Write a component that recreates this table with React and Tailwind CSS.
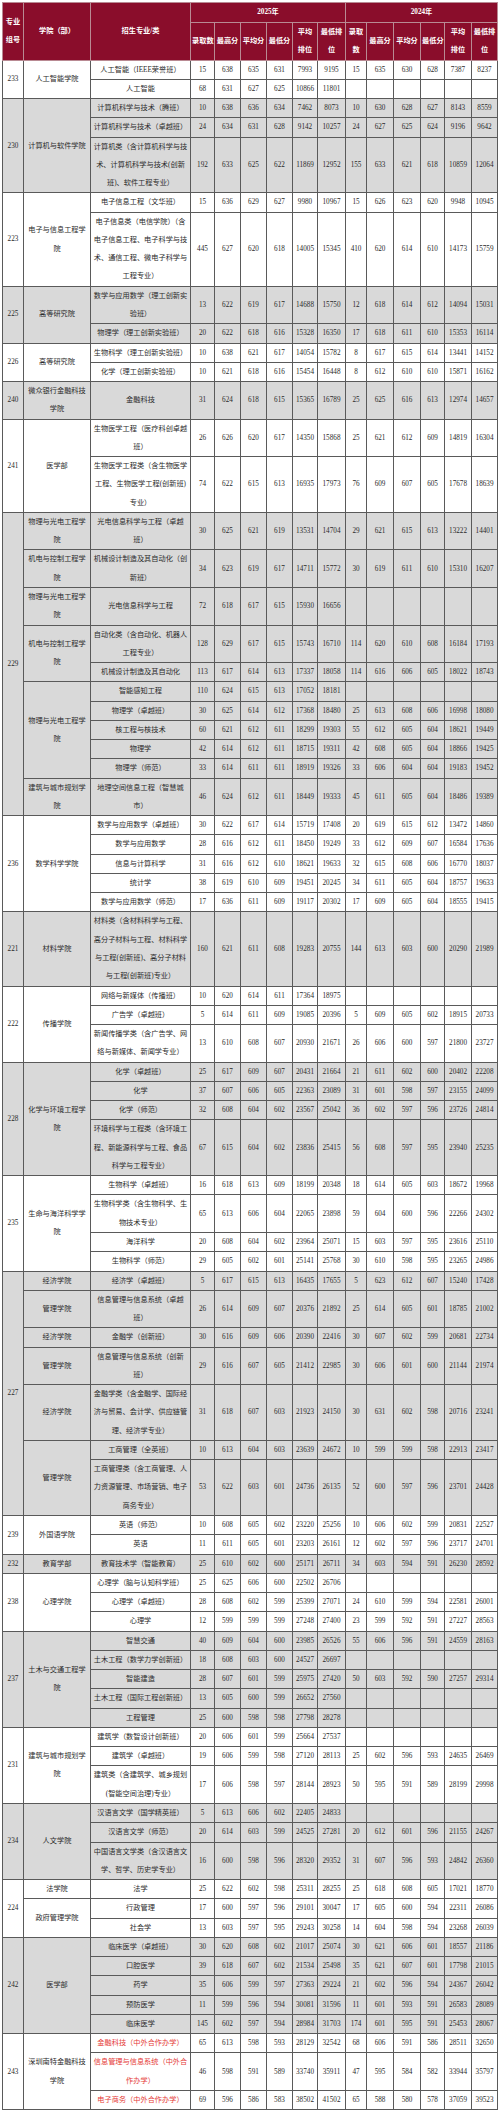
import React from 'react';

// 招生录取数据：每组 = 专业组号 + 若干行
const groups = [
  { code: '233', rows: [
    { col: ['人工智能学院'], span: 2, major: ['人工智能（IEEE荣誉班）'], n: '15 638 635 631 7993 9195 15 635 630 628 7387 8237' },
    { major: ['人工智能'], n: '68 631 627 625 10866 11801' },
  ]},
  { code: '230', rows: [
    { col: ['计算机与软件学院'], span: 3, major: ['计算机科学与技术（腾班）'], n: '10 638 636 634 7462 8073 10 630 628 627 8143 8559' },
    { major: ['计算机科学与技术（卓越班）'], n: '24 634 631 628 9142 10257 24 627 625 624 9196 9642' },
    { major: ['计算机类（含计算机科学与技', '术、计算机科学与技术(创新', '班)、软件工程专业）'], n: '192 633 625 622 11869 12952 155 633 621 618 10859 12064' },
  ]},
  { code: '223', rows: [
    { col: ['电子与信息工程学', '院'], span: 2, major: ['电子信息工程（文华班）'], n: '15 636 629 627 9980 10967 15 626 623 620 9948 10945' },
    { major: ['电子信息类（电信学院）（含', '电子信息工程、电子科学与技', '术、通信工程、微电子科学与', '工程专业）'], n: '445 627 620 618 14005 15345 410 620 614 610 14173 15759' },
  ]},
  { code: '225', rows: [
    { col: ['高等研究院'], span: 2, major: ['数学与应用数学（理工创新实', '验班）'], n: '13 622 619 617 14688 15750 12 618 614 612 14094 15031' },
    { major: ['物理学（理工创新实验班）'], n: '20 622 618 616 15328 16350 17 618 611 610 15353 16114' },
  ]},
  { code: '226', rows: [
    { col: ['高等研究院'], span: 2, major: ['生物科学（理工创新实验班）'], n: '10 638 621 617 14054 15782 8 617 615 614 13441 14152' },
    { major: ['化学（理工创新实验班）'], n: '10 621 618 616 15454 16448 8 612 610 610 15871 16162' },
  ]},
  { code: '240', rows: [
    { col: ['微众银行金融科技', '学院'], span: 1, major: ['金融科技'], n: '31 624 618 615 15365 16789 25 625 616 613 12974 14657' },
  ]},
  { code: '241', rows: [
    { col: ['医学部'], span: 2, major: ['生物医学工程（医疗科创卓越', '班）'], n: '26 626 620 617 14350 15868 25 621 612 609 14819 16304' },
    { major: ['生物医学工程类（含生物医学', '工程、生物医学工程(创新班)', '专业）'], n: '74 622 615 613 16935 17973 76 609 607 605 17678 18639' },
  ]},
  { code: '229', rows: [
    { col: ['物理与光电工程学', '院'], span: 1, major: ['光电信息科学与工程（卓越', '班）'], n: '30 625 621 619 13531 14704 29 621 615 613 13222 14401' },
    { col: ['机电与控制工程学', '院'], span: 1, major: ['机械设计制造及其自动化（创', '新班）'], n: '34 623 619 617 14711 15772 30 619 611 610 15310 16207' },
    { col: ['物理与光电工程学', '院'], span: 1, major: ['光电信息科学与工程'], n: '72 618 617 615 15930 16656' },
    { col: ['机电与控制工程学', '院'], span: 2, major: ['自动化类（含自动化、机器人', '工程专业）'], n: '128 629 617 615 15743 16710 114 620 610 608 16184 17193' },
    { major: ['机械设计制造及其自动化'], n: '113 617 614 613 17337 18058 114 616 606 605 18022 18743' },
    { col: ['物理与光电工程学', '院'], span: 5, major: ['智能感知工程'], n: '110 624 615 613 17052 18181' },
    { major: ['物理学（卓越班）'], n: '30 625 614 612 17368 18480 25 613 608 606 16998 18080' },
    { major: ['核工程与核技术'], n: '60 621 612 611 18299 19303 55 612 605 604 18621 19449' },
    { major: ['物理学'], n: '42 614 612 611 18715 19311 42 608 605 604 18866 19425' },
    { major: ['物理学（师范）'], n: '33 614 611 611 18919 19326 33 606 604 604 19183 19452' },
    { col: ['建筑与城市规划学', '院'], span: 1, major: ['地理空间信息工程（智慧城', '市）'], n: '46 624 612 611 18449 19333 45 611 605 604 18486 19389' },
  ]},
  { code: '236', rows: [
    { col: ['数学科学学院'], span: 5, major: ['数学与应用数学（卓越班）'], n: '30 622 617 614 15719 17408 20 619 615 612 13472 14860' },
    { major: ['数学与应用数学'], n: '28 616 612 611 18450 19249 33 612 609 607 16584 17636' },
    { major: ['信息与计算科学'], n: '31 616 612 610 18621 19633 32 615 608 606 16770 18037' },
    { major: ['统计学'], n: '38 619 610 609 19451 20245 34 611 605 604 18757 19633' },
    { major: ['数学与应用数学（师范）'], n: '17 636 611 609 19117 20302 17 609 605 604 18555 19415' },
  ]},
  { code: '221', rows: [
    { col: ['材料学院'], span: 1, major: ['材料类（含材料科学与工程、', '高分子材料与工程、材料科学', '与工程(创新班)、高分子材料', '与工程(创新班)专业）'], n: '160 621 611 608 19283 20755 144 613 603 600 20290 21989' },
  ]},
  { code: '222', rows: [
    { col: ['传播学院'], span: 3, major: ['网络与新媒体（传播班）'], n: '10 620 614 611 17364 18975' },
    { major: ['广告学（卓越班）'], n: '5 614 611 609 19085 20396 5 609 605 602 18915 20733' },
    { major: ['新闻传播学类（含广告学、网', '络与新媒体、新闻学专业）'], n: '13 610 608 607 20930 21671 26 606 600 597 21800 23727' },
  ]},
  { code: '228', rows: [
    { col: ['化学与环境工程学', '院'], span: 4, major: ['化学（卓越班）'], n: '25 617 609 607 20431 21664 21 611 602 600 20402 22208' },
    { major: ['化学'], n: '37 607 606 605 22363 23089 31 601 598 597 23155 24099' },
    { major: ['化学（师范）'], n: '32 608 604 602 23567 25042 36 602 597 596 23726 24814' },
    { major: ['环境科学与工程类（含环境工', '程、新能源科学与工程、食品', '科学与工程专业）'], n: '67 615 604 602 23836 25415 56 608 597 595 23940 25235' },
  ]},
  { code: '235', rows: [
    { col: ['生命与海洋科学学', '院'], span: 4, major: ['生物科学（卓越班）'], n: '16 618 613 609 18199 20348 18 614 605 603 18672 19968' },
    { major: ['生物科学类（含生物科学、生', '物技术专业）'], n: '65 613 606 604 22065 23898 59 604 600 596 22266 24302' },
    { major: ['海洋科学'], n: '20 608 604 602 23964 25071 15 603 597 595 23616 25110' },
    { major: ['生物科学（师范）'], n: '29 605 602 601 25141 25768 30 610 598 595 23265 24986' },
  ]},
  { code: '227', rows: [
    { col: ['经济学院'], span: 1, major: ['经济学（卓越班）'], n: '5 617 615 613 16435 17655 5 623 612 607 15240 17428' },
    { col: ['管理学院'], span: 1, major: ['信息管理与信息系统（卓越', '班）'], n: '26 614 609 607 20376 21892 25 614 605 601 18785 21002' },
    { col: ['经济学院'], span: 1, major: ['金融学（创新班）'], n: '30 616 609 606 20390 22416 30 607 602 599 20681 22734' },
    { col: ['管理学院'], span: 1, major: ['信息管理与信息系统（创新', '班）'], n: '29 616 607 605 21412 22985 30 606 601 600 21144 21974' },
    { col: ['经济学院'], span: 1, major: ['金融学类（含金融学、国际经', '济与贸易、会计学、供应链管', '理、经济学专业）'], n: '31 618 607 603 21923 24150 30 631 602 598 20716 23241' },
    { col: ['管理学院'], span: 2, major: ['工商管理（全英班）'], n: '10 613 604 603 23639 24672 10 599 599 598 22913 23417' },
    { major: ['工商管理类（含工商管理、人', '力资源管理、市场营销、电子', '商务专业）'], n: '53 622 603 601 24736 26135 52 600 597 596 23701 24428' },
  ]},
  { code: '239', rows: [
    { col: ['外国语学院'], span: 2, major: ['英语（师范）'], n: '10 608 605 602 23220 25256 10 606 602 599 20831 22527' },
    { major: ['英语'], n: '11 611 605 601 23203 26161 12 602 597 596 23717 24701' },
  ]},
  { code: '232', rows: [
    { col: ['教育学部'], span: 1, major: ['教育技术学（智能教育）'], n: '25 610 602 600 25171 26711 34 603 594 591 26230 28592' },
  ]},
  { code: '238', rows: [
    { col: ['心理学院'], span: 3, major: ['心理学（脑与认知科学班）'], n: '25 625 606 600 22502 26706' },
    { major: ['心理学（卓越班）'], n: '28 608 602 599 25399 27071 24 610 599 594 22581 26001' },
    { major: ['心理学'], n: '12 599 599 599 27248 27400 23 599 592 591 27227 28563' },
  ]},
  { code: '237', rows: [
    { col: ['土木与交通工程学', '院'], span: 5, major: ['智慧交通'], n: '40 609 604 600 23985 26526 55 606 596 591 24559 28163' },
    { major: ['土木工程（数学力学创新班）'], n: '18 608 603 600 24527 26697' },
    { major: ['智能建造'], n: '28 607 601 599 25975 27420 50 603 592 590 27257 29314' },
    { major: ['土木工程（国际工程创新班）'], n: '13 605 600 599 26652 27560' },
    { major: ['工程管理'], n: '25 600 598 598 27798 28278' },
  ]},
  { code: '231', rows: [
    { col: ['建筑与城市规划学', '院'], span: 3, major: ['建筑学（数智设计创新班）'], n: '20 606 601 599 25664 27537' },
    { major: ['建筑学（卓越班）'], n: '19 606 599 598 27120 28113 25 602 596 593 24635 26469' },
    { major: ['建筑类（含建筑学、城乡规划', '(智能空间治理)专业）'], n: '17 606 598 597 28144 28923 50 595 591 589 28199 29998' },
  ]},
  { code: '234', rows: [
    { col: ['人文学院'], span: 3, major: ['汉语言文学（国学精英班）'], n: '5 613 606 602 22405 24833' },
    { major: ['汉语言文学（师范）'], n: '20 614 603 599 24525 27281 20 612 601 596 21155 24267' },
    { major: ['中国语言文学类（含汉语言文', '学、哲学、历史学专业）'], n: '16 600 598 596 28320 29352 31 607 596 593 24842 26360' },
  ]},
  { code: '224', rows: [
    { col: ['法学院'], span: 1, major: ['法学'], n: '25 622 602 598 25311 28255 25 618 608 605 17021 18770' },
    { col: ['政府管理学院'], span: 2, major: ['行政管理'], n: '17 600 597 596 29101 30047 17 605 600 594 22311 26086' },
    { major: ['社会学'], n: '13 603 597 595 29243 30258 14 604 598 594 23268 26039' },
  ]},
  { code: '242', rows: [
    { col: ['医学部'], span: 5, major: ['临床医学（卓越班）'], n: '30 620 608 602 21017 25074 30 621 606 601 18557 21186' },
    { major: ['口腔医学'], n: '39 618 607 602 21534 25498 35 621 607 601 17798 21015' },
    { major: ['药学'], n: '35 606 599 597 27363 29224 21 602 596 594 24367 26042' },
    { major: ['预防医学'], n: '11 599 596 594 30081 31596 11 601 593 591 26583 28089' },
    { major: ['临床医学'], n: '145 602 597 594 28984 31703 174 601 595 591 25453 28067' },
  ]},
  { code: '243', rows: [
    { col: ['深圳南特金融科技', '学院'], span: 3, red: true, major: ['金融科技（中外合作办学）'], n: '65 613 598 593 28129 32542 68 606 591 586 28511 32650' },
    { red: true, major: ['信息管理与信息系统（中外合', '作办学）'], n: '46 598 591 589 33740 35911 47 595 584 582 33944 35797' },
    { red: true, major: ['电子商务（中外合作办学）'], n: '69 596 586 583 38502 41502 65 588 580 578 37059 39523' },
  ]},
];

const widths = [21, 67, 100, 24, 26, 26, 26, 25, 28, 21, 27, 27, 24, 27, 26];

const sub2025 = [['录取数'], ['最高分'], ['平均分'], ['最低分'], ['平均', '排位'], ['最低排', '位']];
const sub2024 = [['录取', '数'], ['最高分'], ['平均分'], ['最低分'], ['平均', '排位'], ['最低排', '位']];

const Lines = ({ lines }) =>
  lines.map((l, i) => (
    <React.Fragment key={i}>
      {i > 0 && <br />}
      {l}
    </React.Fragment>
  ));

const td = 'border border-[#5a5a5a] text-center align-middle px-[1px] py-0 whitespace-nowrap';
const th = 'border border-[#b98a93] text-center align-middle px-[1px] py-0 whitespace-nowrap font-bold text-white';

export default function App() {
  return (
    <div className="bg-white w-[500px] min-h-[2112px] pl-[2px] pt-[2px] font-['Liberation_Serif','Noto_Sans_CJK_SC',serif] text-[7.2px] leading-[18.27px] text-[#2a2a2a]">
      <table className="table-fixed border-collapse w-[495px] border border-[#5a5a5a]">
        <colgroup>
          {widths.map((w, i) => (
            <col key={i} style={{ width: w }} />
          ))}
        </colgroup>
        <thead className="bg-[#8a0d2b]">
          <tr className="h-[20px]">
            <th rowSpan={2} className={th}>专业<br />组号</th>
            <th rowSpan={2} className={th}>学院（部）</th>
            <th rowSpan={2} className={th}>招生专业/类</th>
            <th colSpan={6} className={th}>2025年</th>
            <th colSpan={6} className={th}>2024年</th>
          </tr>
          <tr>
            {sub2025.map((h, i) => (
              <th key={'a' + i} className={th}><Lines lines={h} /></th>
            ))}
            {sub2024.map((h, i) => (
              <th key={'b' + i} className={th}><Lines lines={h} /></th>
            ))}
          </tr>
        </thead>
        <tbody>
          {groups.map((g, gi) =>
            g.rows.map((r, ri) => {
              const nums = r.n.split(' ');
              while (nums.length < 12) nums.push('');
              return (
                <tr key={g.code + '-' + ri} className={gi % 2 ? 'bg-[#d9d9d9]' : 'bg-white'}>
                  {ri === 0 && (
                    <td rowSpan={g.rows.length} className={td}>{g.code}</td>
                  )}
                  {r.col && (
                    <td rowSpan={r.span} className={td + ' px-[3px]'}>
                      <Lines lines={r.col} />
                    </td>
                  )}
                  <td className={td + (r.red ? ' text-[#e53935]' : '')}>
                    <Lines lines={r.major} />
                  </td>
                  {nums.map((v, i) => (
                    <td key={i} className={td}>{v}</td>
                  ))}
                </tr>
              );
            })
          )}
        </tbody>
      </table>
    </div>
  );
}
